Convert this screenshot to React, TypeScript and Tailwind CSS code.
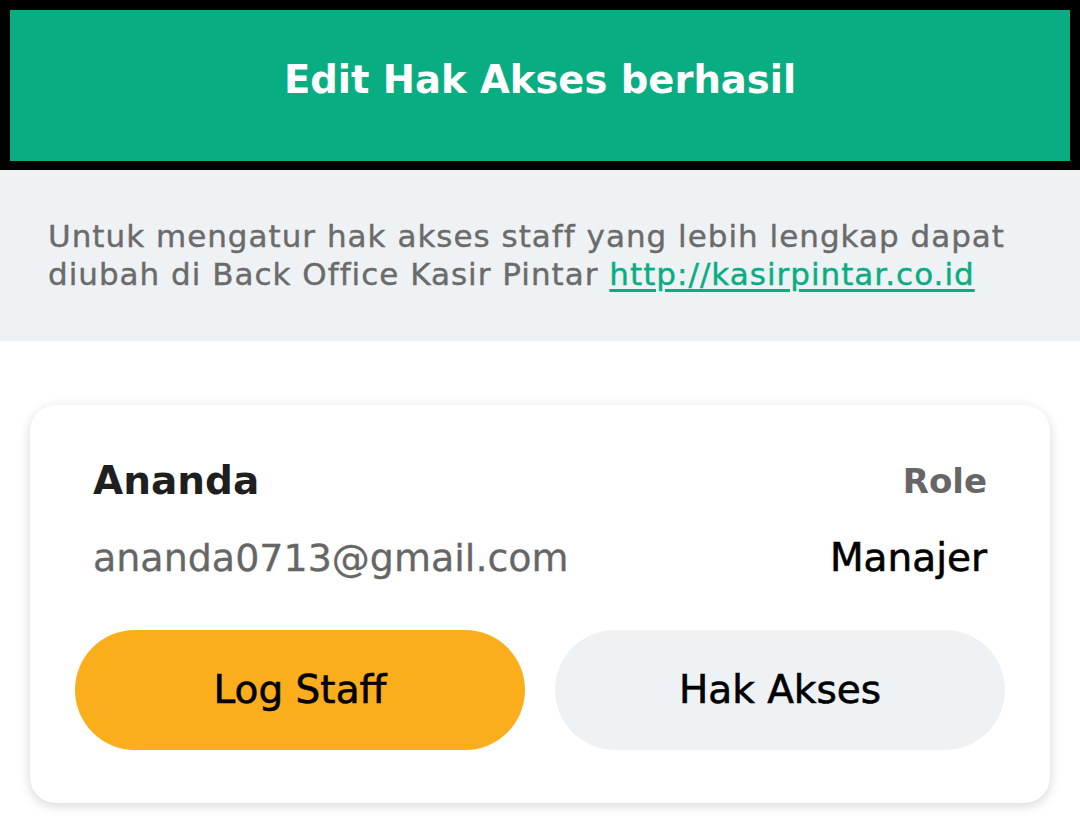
import React from "react";

const font = { fontFamily: "'DejaVu Sans', 'Noto Sans', sans-serif" };

export default function App() {
  return (
    <div className="w-[1080px] h-[824px] bg-white overflow-hidden" style={font}>
      {/* Toast */}
      <div className="bg-black px-[10px] pt-[10px] pb-[9px]">
        <div className="h-[151px] bg-[#08ae82] flex items-center justify-center pb-[11px]">
          <span className="text-white text-[38.5px] leading-[46px] font-bold">Edit Hak Akses berhasil</span>
        </div>
      </div>

      {/* Info */}
      <div className="h-[171px] bg-[#eff2f5] px-[48px] pt-[47px]">
        <p className="text-[#6b6b6b] text-[31px] leading-[38px] tracking-[1px] [-webkit-text-stroke:0.4px_#6b6b6b]">
          Untuk mengatur hak akses staff yang lebih lengkap dapat diubah di Back Office Kasir Pintar{" "}
          <a href="#" className="text-[#08ae82] underline underline-offset-4 [-webkit-text-stroke:0.4px_#08ae82]">
            http://kasirpintar.co.id
          </a>
        </p>
      </div>

      {/* Card */}
      <div className="px-[30px] pt-[64px]">
        <div className="rounded-[26px] bg-white shadow-[0_3px_12px_rgba(0,0,0,0.16)] px-[45px] pt-[56px] pb-[53px]">
          <div className="px-[18px] h-[40px] flex items-center justify-between">
            <span className="text-[#1f1f1f] text-[39px] font-bold">Ananda</span>
            <span className="text-[#666666] text-[34px] font-bold">Role</span>
          </div>
          <div className="px-[18px] mt-[37px] h-[40px] flex items-center justify-between">
            <span className="text-[#666666] text-[38px] [-webkit-text-stroke:0.3px_#666666]">ananda0713@gmail.com</span>
            <span className="text-black text-[39px] [-webkit-text-stroke:0.6px_#000]">Manajer</span>
          </div>
          <div className="mt-[52px] grid grid-cols-2 gap-[30px]">
            <button className="h-[120px] rounded-full bg-[#fbae1c] text-black text-[39px] [-webkit-text-stroke:0.6px_#000]">
              Log Staff
            </button>
            <button className="h-[120px] rounded-full bg-[#eff2f5] text-black text-[39px] [-webkit-text-stroke:0.6px_#000]">
              Hak Akses
            </button>
          </div>
        </div>
      </div>
    </div>
  );
}
